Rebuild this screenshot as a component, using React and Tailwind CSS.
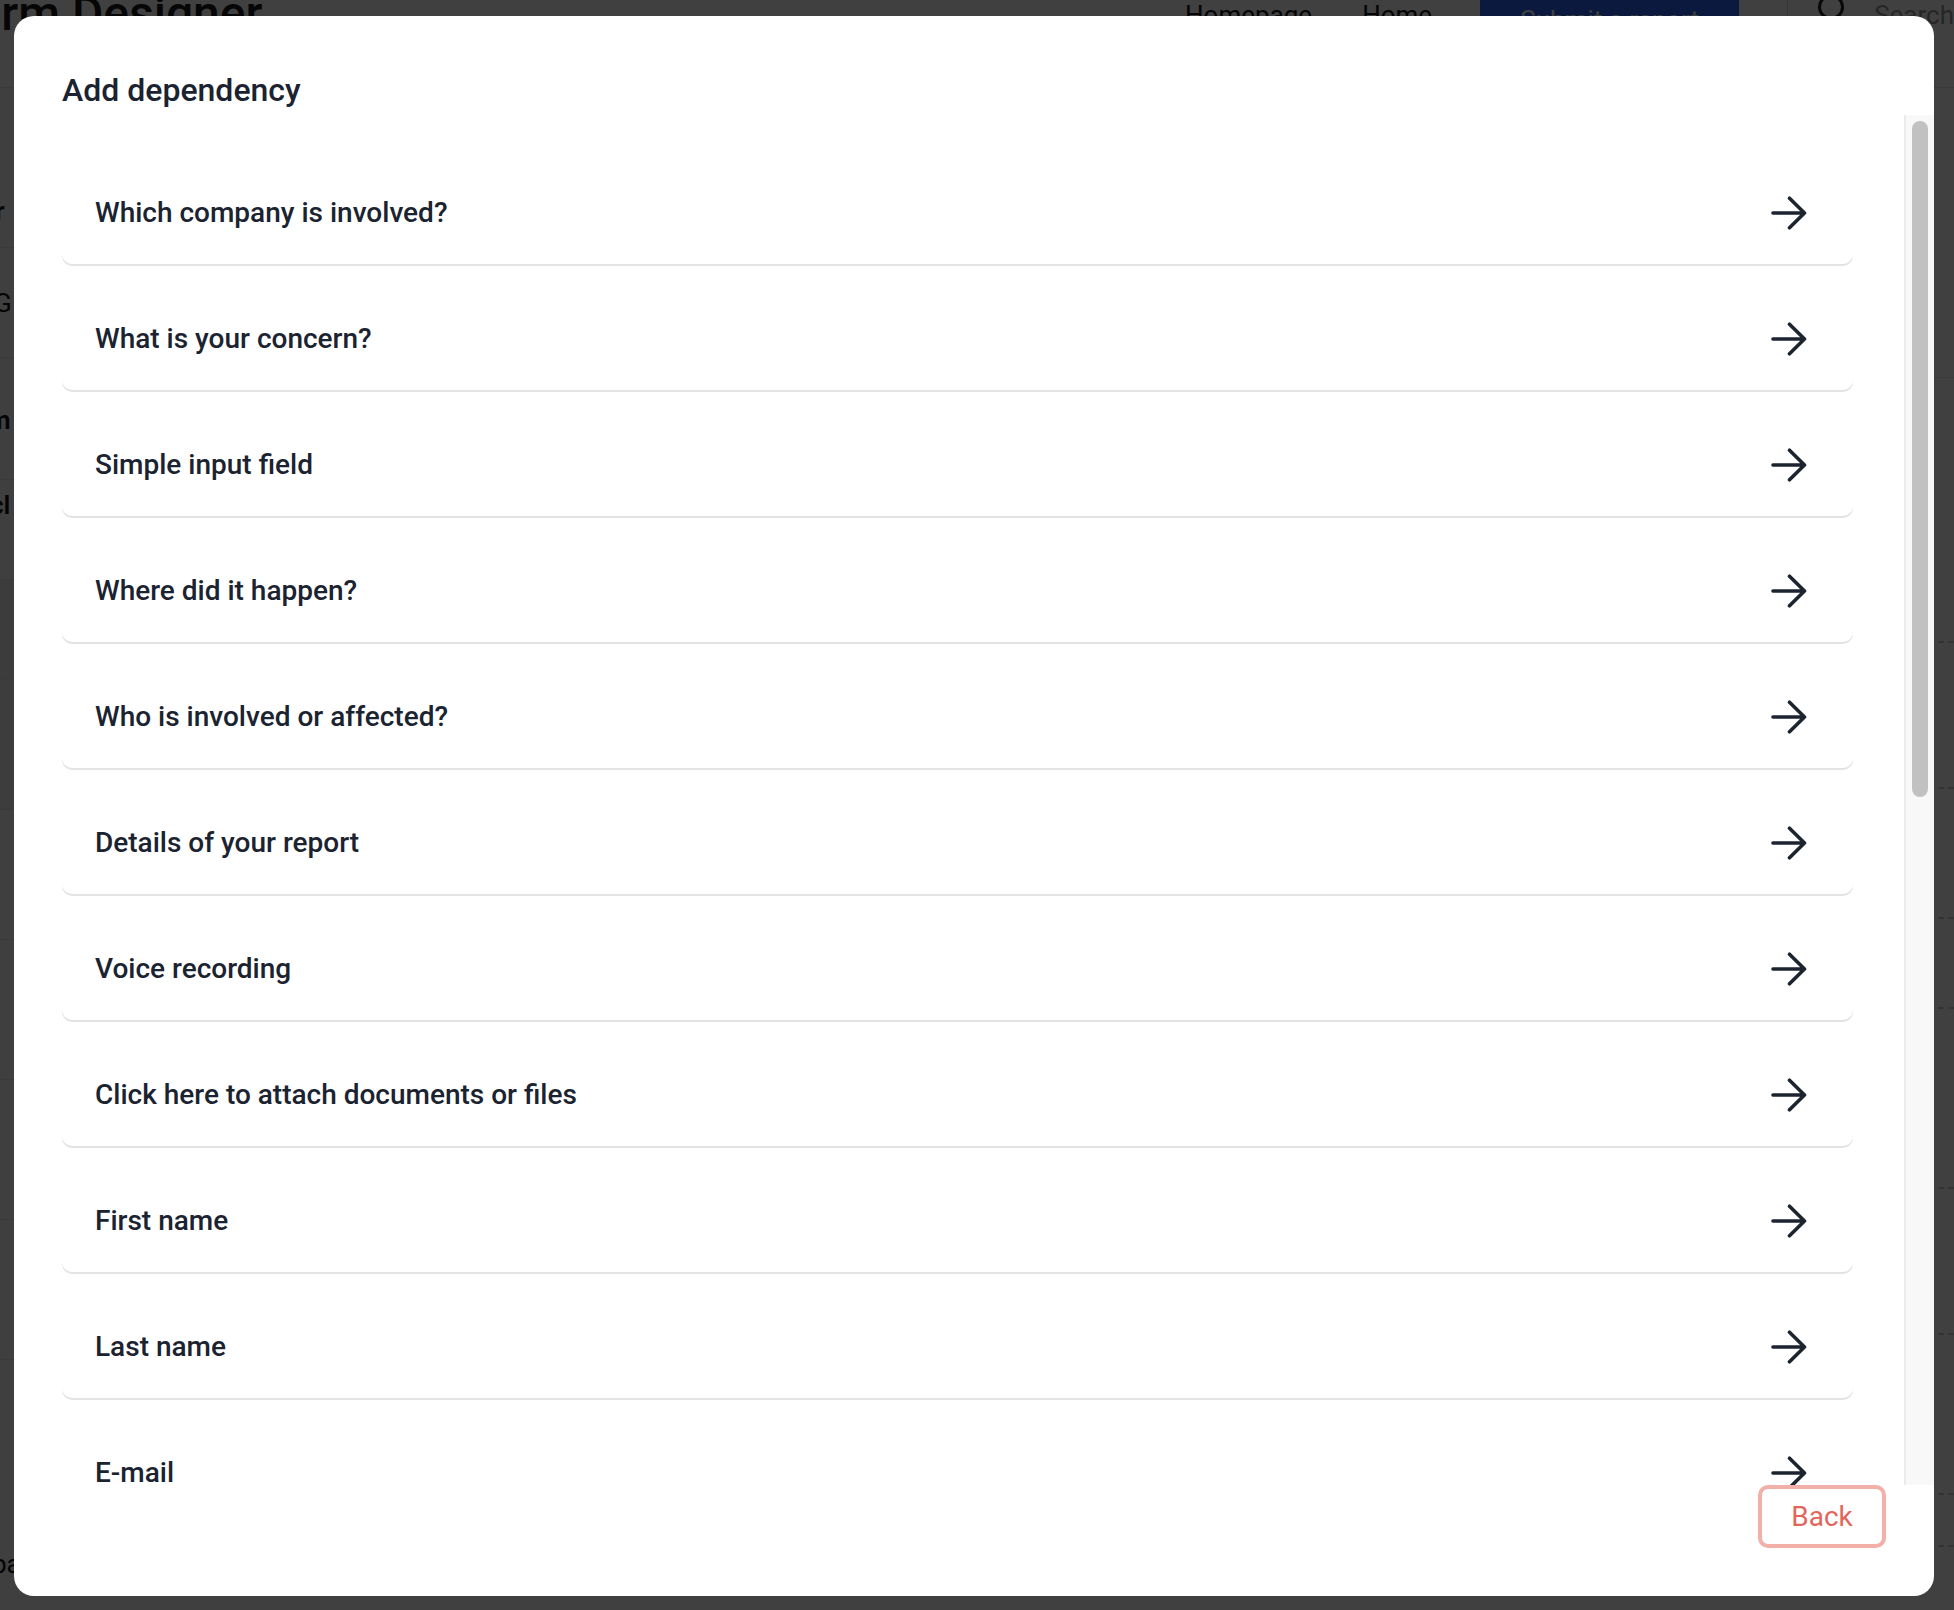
import React from "react";

const items = [
  "Which company is involved?",
  "What is your concern?",
  "Simple input field",
  "Where did it happen?",
  "Who is involved or affected?",
  "Details of your report",
  "Voice recording",
  "Click here to attach documents or files",
  "First name",
  "Last name",
  "E-mail",
  "Phone number",
  "Address",
  "When did it happen?",
  "How did you become aware of the incident?",
  "Has the incident been reported before?",
  "Is the incident still ongoing?",
  "Preferred language",
  "Role in the company",
  "Date of birth",
  "Additional comments",
];

function Arrow() {
  return (
    <svg width="36" height="34" viewBox="0 0 36 34" fill="none" className="shrink-0">
      <path
        d="M2 17H33.5M18.5 2.2L33.5 17L18.5 31.8"
        stroke="#1c2430"
        strokeWidth="3.6"
        strokeLinecap="round"
        strokeLinejoin="round"
      />
    </svg>
  );
}

function Background() {
  return (
    <div className="absolute inset-0 flex flex-col bg-white">
      <div className="flex h-[88px] items-start border-b border-[#e5e7eb]">
        <div className="ml-[-52px] mt-[-10px] text-[48px] leading-[48px] font-medium text-[#1a1a1a] whitespace-nowrap">
          Form Designer
        </div>
        <div className="ml-auto flex items-start">
          <span className="mr-[50px] mt-[-4px] text-[26px] text-[#111]">Homepage</span>
          <span className="mr-[48px] mt-[-4px] text-[26px] text-[#111]">Home</span>
          <div className="mt-[-10px] flex h-[60px] w-[259px] items-center justify-center rounded-[6px] bg-[#2a63f2] text-[26px] text-white">
            Submit a report
          </div>
          <div className="ml-[48px] h-[60px] w-px bg-[#d1d5db]" />
          <div className="ml-[30px] mt-[-6px] h-[26px] w-[26px] rounded-full border-[3px] border-[#222]" />
          <span className="ml-[30px] mt-[-4px] text-[26px] text-[#999]">Search</span>
        </div>
      </div>
      <div className="flex flex-1">
        <div className="flex w-[320px] flex-col bg-[#fafafa] text-[26px] font-semibold text-[#111]">
          <div className="flex h-[160px] items-end border-b border-[#e5e7eb] pb-[16px]">
            <span className="ml-[-14px] leading-[40px]">rr</span>
          </div>
          <div className="flex h-[110px] items-center border-b border-[#e5e7eb]">
            <span className="ml-[-6px] font-normal leading-[40px]">G</span>
          </div>
          <div className="flex h-[122px] items-end border-b border-[#e5e7eb] pb-[39px]">
            <span className="ml-[-12px] leading-[40px]">m</span>
          </div>
          <div className="flex h-[100px] items-center border-b border-[#e5e7eb] pb-[50px]">
            <span className="ml-[-10px] leading-[40px]">cl</span>
          </div>
          <div className="h-[100px] border-b border-[#e5e7eb] bg-[#f0f0f0]" />
          <div className="h-[130px] border-b border-[#e5e7eb] bg-[#f3f3f3]" />
          <div className="h-[130px] border-b border-[#e5e7eb]" />
          <div className="h-[140px] border-b border-[#e5e7eb]" />
          <div className="h-[140px] border-b border-[#e5e7eb]" />
          <div className="h-[140px] border-b border-[#e5e7eb]" />
          <div className="flex flex-1 items-end pb-[26px]">
            <span className="ml-[-8px] font-normal leading-[40px]">ba</span>
          </div>
        </div>
        <div className="flex flex-1 flex-col">
          <div className="h-[290px] border-b border-[#e5e7eb]" />
          <div className="h-[265px] border-b-2 border-dashed border-[#cfcfcf]" />
          <div className="h-[146px] border-b-2 border-dashed border-[#cfcfcf]" />
          <div className="h-[130px] border-b-2 border-dashed border-[#cfcfcf]" />
          <div className="h-[90px] border-b-2 border-dashed border-[#cfcfcf]" />
          <div className="h-[180px] border-b-2 border-dashed border-[#cfcfcf]" />
          <div className="h-[146px] border-b-2 border-dashed border-[#cfcfcf]" />
          <div className="h-[160px] border-b-2 border-dashed border-[#cfcfcf]" />
          <div className="h-[52px] border-b-2 border-dashed border-[#cfcfcf]" />
        </div>
      </div>
    </div>
  );
}

export default function App() {
  return (
    <div className="relative h-[1610px] w-[1954px] overflow-hidden font-[Roboto,'Liberation_Sans',sans-serif]">
      <Background />
      <div className="absolute inset-0 bg-black/75" />
      <div className="absolute left-[14px] top-[16px] flex h-[1580px] w-[1920px] flex-col overflow-hidden rounded-[20px] bg-white">
        <h2 className="mb-[1px] px-12 pt-[50px] text-[32px] leading-[48px] font-medium text-[#1b2330]">
          Add dependency
        </h2>
        <div className="flex min-h-0 flex-1">
          <div className="flex min-w-0 flex-1 flex-col gap-6 overflow-hidden pl-12 pr-[51px] pt-[47px]">
            {items.map((label) => (
              <div
                key={label}
                className="flex h-[102px] shrink-0 items-center justify-between rounded-[10px] bg-white pl-[33px] pr-[46px] shadow-[0_2px_0_0_#e3e3e3]"
              >
                <span className="text-[28px] font-medium text-[#1b2330]">{label}</span>
                <Arrow />
              </div>
            ))}
          </div>
          <div className="w-[30px] shrink-0 border-l-2 border-[#ebebeb] bg-[#f8f8f8] pl-[6px] pt-[6px]">
            <div className="h-[676px] w-4 rounded-full bg-[#c1c1c1]" />
          </div>
        </div>
        <div className="flex justify-end px-12 pb-12">
          <button className="flex h-[63px] w-[128px] items-center justify-center rounded-[10px] border-4 border-[#f2b0a8] bg-white text-[28px] text-[#e2665c]">
            Back
          </button>
        </div>
      </div>
    </div>
  );
}
